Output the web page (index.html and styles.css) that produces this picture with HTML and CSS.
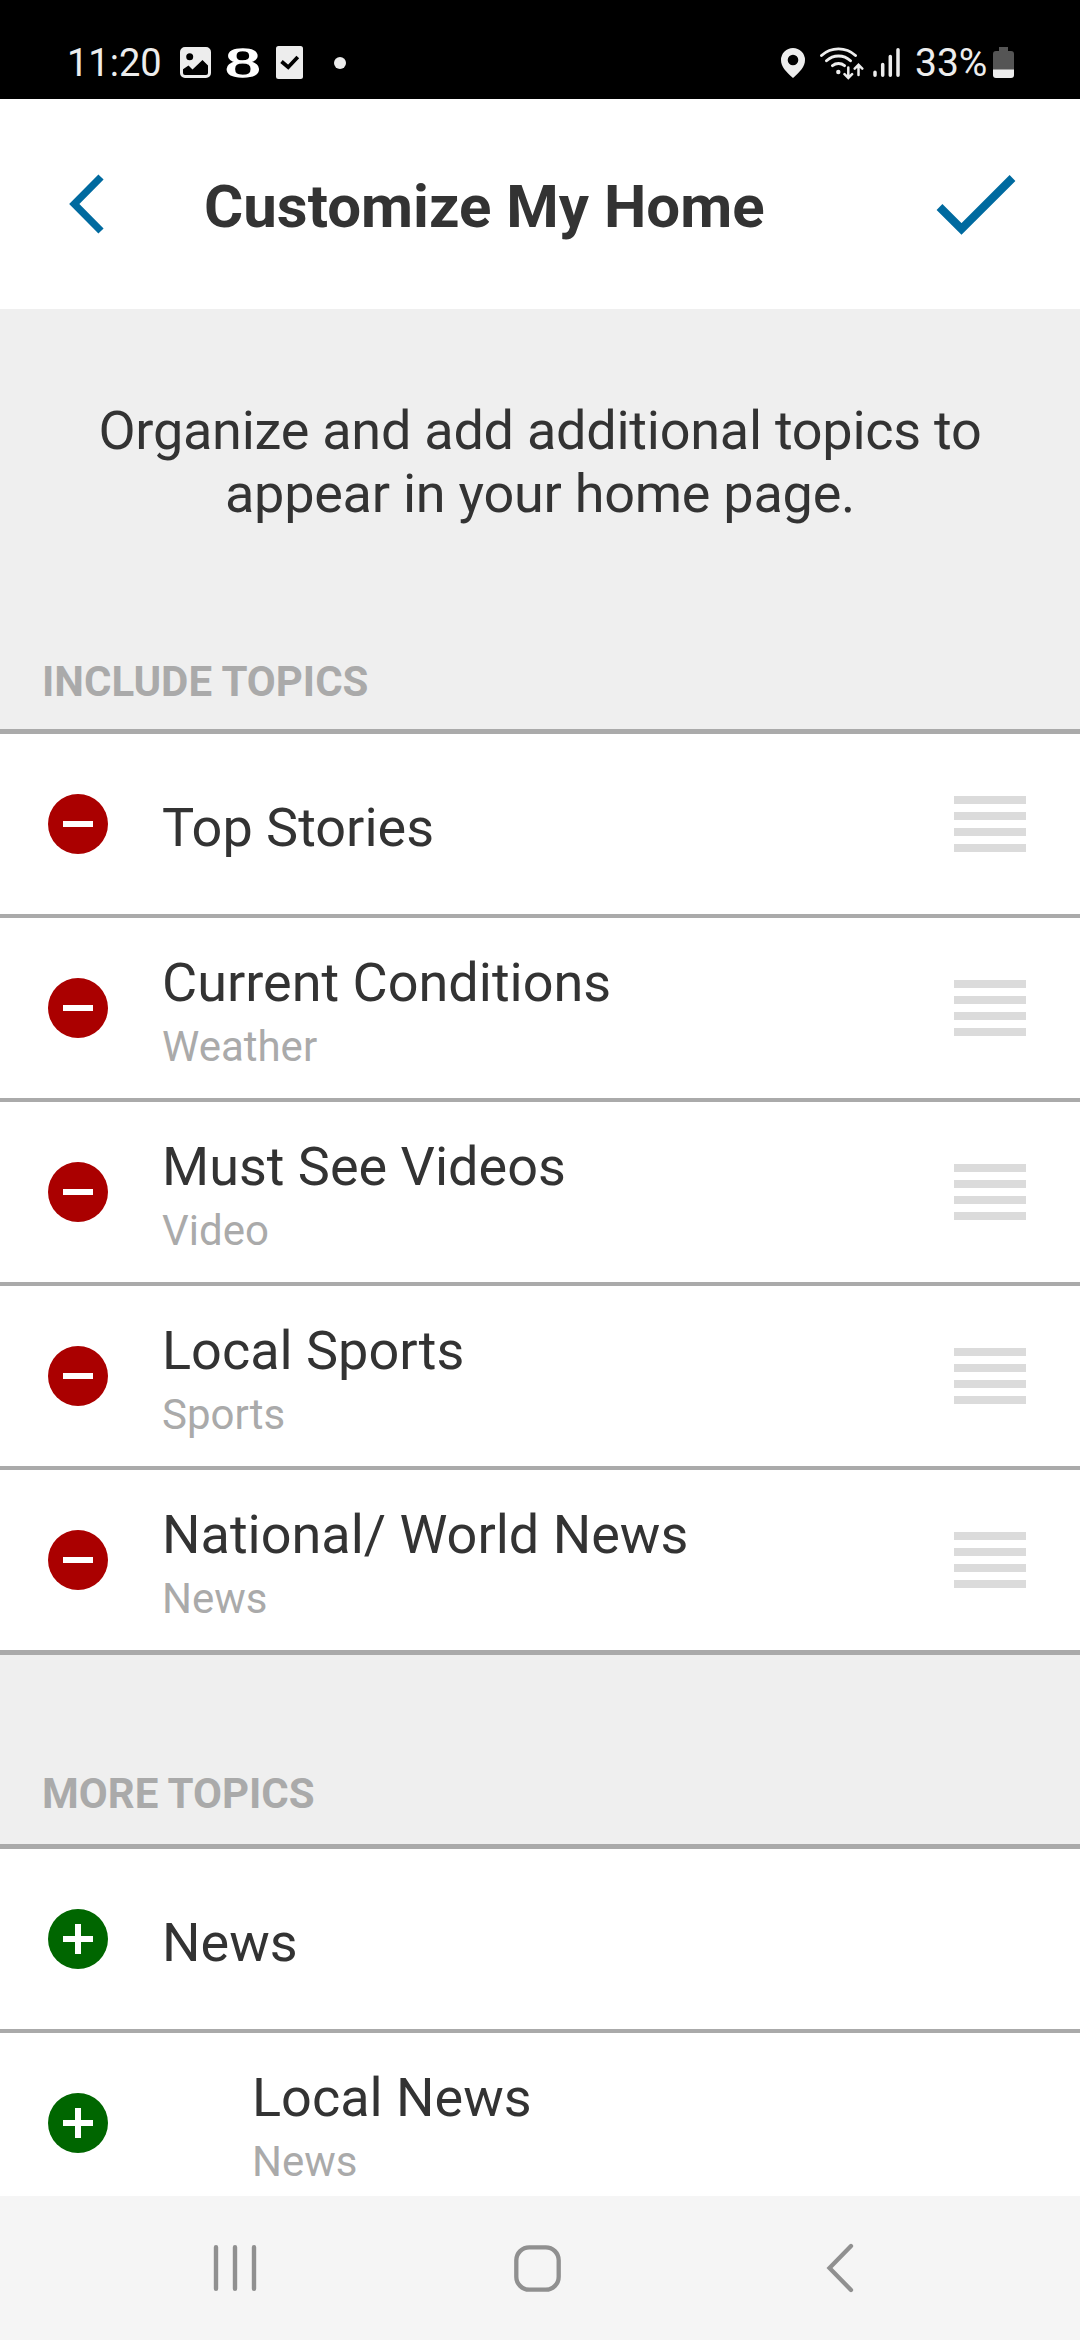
FILE: index.html
```html
<!DOCTYPE html>
<html lang="en">
<head>
<meta charset="utf-8">
<title>Customize My Home</title>
<link rel="stylesheet" href="styles.css">
</head>
<body>
<svg class="defs" width="0" height="0">
  <symbol id="minus" viewBox="0 0 60 60"><circle cx="30" cy="30" r="30" fill="#a00"/><path d="M15 27h30v6H15z" fill="#fff"/></symbol>
  <symbol id="plus" viewBox="0 0 60 60"><circle cx="30" cy="30" r="30" fill="#060"/><path d="M15 27h12V15h6v12h12v6H33v12h-6V33H15z" fill="#fff"/></symbol>
  <symbol id="grip" viewBox="0 0 72 56"><path d="M0 0h72v8H0zM0 16h72v8H0zM0 32h72v8H0zM0 48h72v8H0z" fill="#dbdbdb"/></symbol>
</svg>
<div class="screen">
  <div class="status">
    <div class="status-left">
      <span class="clock">11:20</span>
      <svg class="s-image" width="31" height="31" viewBox="0 0 31 31"><path fill-rule="evenodd" fill="#ededed" d="M5 0h21a5 5 0 0 1 5 5v21a5 5 0 0 1-5 5H5a5 5 0 0 1-5-5V5a5 5 0 0 1 5-5zM9.7 6.2a3.5 3.5 0 1 0 0 7 3.5 3.5 0 0 0 0-7zM3 22.300v3.700a2 2 0 0 0 2 2h21a2 2 0 0 0 2-2v-7.500l-5.500-5.500-10 9.500-4-4z"/></svg>
      <span class="eight"><span>8</span></span>
      <svg class="s-check" width="27" height="33" viewBox="0 0 27 33"><rect width="27" height="33" rx="2.500" fill="#ededed"/><path d="M5.500 15.500l6.700 5.700L21.800 11" fill="none" stroke="#000" stroke-width="3.800"/></svg>
      <svg class="s-dot" width="12" height="12" viewBox="0 0 12 12"><circle cx="6" cy="6" r="6" fill="#ededed"/></svg>
    </div>
    <div class="status-right">
      <svg width="24" height="30" viewBox="0 0 24 30"><path fill-rule="evenodd" fill="#ededed" d="M12 0a12 12 0 0 1 12 12c0 7-5 11.500-12 18C5 23.500 0 19 0 12A12 12 0 0 1 12 0zm0 6.700a5.300 5.300 0 1 0 0 10.600 5.300 5.300 0 0 0 0-10.600z"/></svg>
      <svg class="s-wifi" width="44" height="34" viewBox="0 0 44 34" fill="none" stroke="#ededed" stroke-width="2.900" stroke-linecap="round"><path d="M1.500 9.500a25 25 0 0 1 34 0M6.500 14.800a17.500 17.500 0 0 1 24 0M12.500 19.700a9.500 9.500 0 0 1 12 0"/><circle cx="18.300" cy="26" r="2.200" fill="#ededed" stroke="none"/><path stroke-width="2.500" d="M28.300 21.500v10M24.500 28.200l3.800 3.800 3.800-3.800M38.500 29V19M34.700 22.600l3.800-3.800 3.800 3.800"/></svg>
      <svg class="s-signal" width="28" height="30" viewBox="0 0 28 30" stroke="#ededed" stroke-width="3.500" stroke-linecap="round"><path d="M2 24.200v3M9.700 16.500v10.700M17.300 8.500v18.700M25 1.800v25.400"/></svg>
      <span class="percent">33%</span>
      <svg class="s-battery" width="21" height="32" viewBox="0 0 21 32"><path d="M6 0h9v4h3a3 3 0 0 1 3 3v16H0V7a3 3 0 0 1 3-3h3z" fill="#555"/><path d="M0 22.500h21V28a3 3 0 0 1-3 3H3a3 3 0 0 1-3-3z" fill="#ededed"/></svg>
    </div>
  </div>

  <header class="header">
    <svg width="36" height="60" viewBox="0 0 36 60"><path d="M32 3L5.300 30 32 57" fill="none" stroke="#006a9f" stroke-width="7.300"/></svg>
    <h1 class="title">Customize My Home</h1>
    <svg class="confirm" width="80" height="62" viewBox="0 0 80 62"><path d="M3.500 34L25.500 56 76.500 5" fill="none" stroke="#006a9f" stroke-width="8.200"/></svg>
  </header>

  <main class="content">
    <p class="intro">Organize and add additional topics to<br>appear in your home page.</p>
    <h2 class="section section-include">INCLUDE TOPICS</h2>
    <ul class="list list-closed">
      <li class="row"><svg class="badge"><use href="#minus"/></svg><div class="label"><span class="name">Top Stories</span></div><svg class="grip"><use href="#grip"/></svg></li>
      <li class="row"><svg class="badge"><use href="#minus"/></svg><div class="label"><span class="name">Current Conditions</span><span class="sub">Weather</span></div><svg class="grip"><use href="#grip"/></svg></li>
      <li class="row"><svg class="badge"><use href="#minus"/></svg><div class="label"><span class="name">Must See Videos</span><span class="sub">Video</span></div><svg class="grip"><use href="#grip"/></svg></li>
      <li class="row"><svg class="badge"><use href="#minus"/></svg><div class="label"><span class="name">Local Sports</span><span class="sub">Sports</span></div><svg class="grip"><use href="#grip"/></svg></li>
      <li class="row"><svg class="badge"><use href="#minus"/></svg><div class="label"><span class="name">National/ World News</span><span class="sub">News</span></div><svg class="grip"><use href="#grip"/></svg></li>
    </ul>
    <h2 class="section section-more">MORE TOPICS</h2>
    <ul class="list">
      <li class="row"><svg class="badge"><use href="#plus"/></svg><div class="label"><span class="name">News</span></div></li>
      <li class="row"><svg class="badge"><use href="#plus"/></svg><div class="label label-nested"><span class="name">Local News</span><span class="sub">News</span></div></li>
    </ul>
  </main>

  <nav class="nav">
    <svg width="44" height="50" viewBox="0 0 44 50" fill="none" stroke="#909090" stroke-width="4.400" stroke-linecap="round"><path d="M3 4.200v41.600M22 4.200v41.600M41 4.200v41.600"/></svg>
    <svg class="home" width="47" height="47" viewBox="0 0 47 47" fill="none" stroke="#909090" stroke-width="4.300"><rect x="2.300" y="2.300" width="42.400" height="42.400" rx="13"/></svg>
    <svg width="28" height="50" viewBox="0 0 28 50" fill="none" stroke="#909090" stroke-width="4.300" stroke-linecap="round"><path d="M25 3L3.500 25 25 47"/></svg>
  </nav>
</div>
</body>
</html>
```
FILE: styles.css
```css
* { box-sizing: border-box; }
body, h1, h2, p, ul { margin: 0; padding: 0; }
body { font-family: Roboto, sans-serif; color: #333; background: #fff; }
svg { display: block; flex: none; }
.defs { position: absolute; }

.screen { display: flex; flex-direction: column; width: 1080px; height: 2340px; overflow: hidden; }

.status { display: flex; flex: none; justify-content: space-between; height: 99px; padding: 25px 66px 0 67px; background: #000; color: #ededed; }
.status-left, .status-right { display: flex; align-items: center; height: 75px; }
.clock { width: 113px; font-size: 38px; }
.eight { display: flex; justify-content: center; width: 31px; margin-left: 16px; color: #fff; font: 43px/45px "Liberation Serif", serif; }
.eight span { transform: scaleX(1.66); -webkit-text-stroke: 1.3px #fff; }
.s-check { margin-left: 18px; }
.s-dot { margin-left: 31px; }
.s-wifi { margin-left: 15px; }
.s-signal { margin-left: 9px; }
.percent { margin-left: 14px; width: 72px; font-size: 39px; }
.s-battery { margin-left: 6px; }

.header { display: flex; flex: none; align-items: center; height: 210px; padding: 0 64px 0 69px; }
.title { margin-left: 99px; padding-top: 5px; font-size: 60px; line-height: 70px; font-weight: 700; white-space: nowrap; }
.confirm { margin-left: auto; }

.content { flex: 1; min-height: 0; overflow: hidden; background: #efefef; }
.intro { height: 326px; padding-top: 90px; font-size: 54px; line-height: 63px; letter-spacing: -0.25px; text-align: center; }
.section { display: flex; align-items: flex-end; padding: 0 42px; font-size: 42px; line-height: 50px; font-weight: 700; color: #aaa; }
.section-include { height: 94px; padding-bottom: 22px; }
.section-more { height: 189px; padding-bottom: 25px; }

.list { list-style: none; border-top: 5px solid #aaa; background: #fff; }
.list-closed { border-bottom: 5px solid #aaa; }
.row { display: flex; align-items: center; height: 184px; padding: 0 54px 0 48px; border-bottom: 4px solid #aaa; }
.list-closed .row:last-child { height: 180px; border-bottom: 0; }
.badge { width: 60px; height: 60px; }
.label { display: flex; flex: 1; flex-direction: column; padding: 7px 0 0 54px; }
.label-nested { padding-left: 144px; }
.name { font-size: 54px; line-height: 64px; }
.sub { margin-top: 5px; font-size: 42px; line-height: 53px; color: #aaa; }
.grip { width: 72px; height: 56px; }

.nav { display: flex; flex: none; align-items: center; justify-content: space-between; height: 144px; padding: 0 226px 0 213px; background: #f5f5f5; }
.home { margin-right: 9px; }
```
